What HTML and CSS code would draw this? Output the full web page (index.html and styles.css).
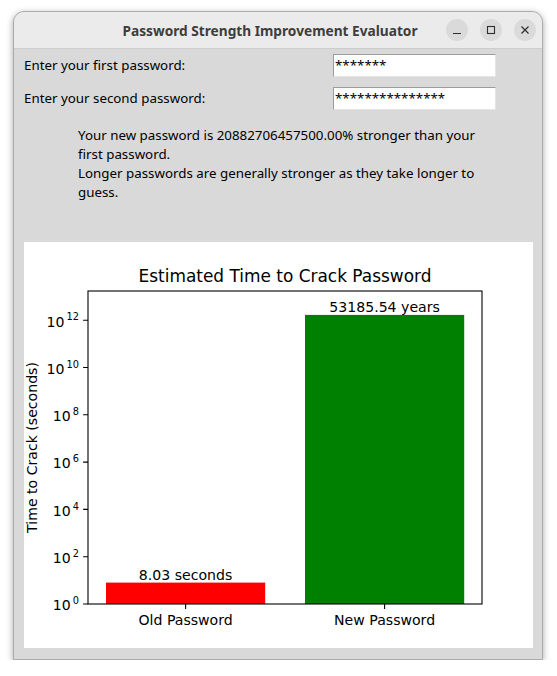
FILE: index.html
```html
<!DOCTYPE html>
<html>
<head>
<meta charset="utf-8">
<link rel="stylesheet" href="styles.css">
</head>
<body>
<div class="window">
  <div class="titlebar">
    <div class="title">Password Strength Improvement Evaluator</div>
    <div class="controls">
      <span class="wbtn"><svg width="10" height="10" viewBox="0 0 10 10"><path d="M1 8.5H9" stroke="#2e2e2e" stroke-width="1.2" fill="none"/></svg></span>
      <span class="wbtn"><svg width="10" height="10" viewBox="0 0 10 10"><rect x="1.5" y="1.5" width="7" height="7" stroke="#2e2e2e" stroke-width="1.1" fill="none"/></svg></span>
      <span class="wbtn"><svg width="10" height="10" viewBox="0 0 10 10"><path d="M1.5 1.5L8.5 8.5M8.5 1.5L1.5 8.5" stroke="#2e2e2e" stroke-width="1.2" fill="none"/></svg></span>
    </div>
  </div>
  <div class="content">
    <div class="form">
      <div class="lbl">Enter your first password:</div>
      <div class="entry">*******</div>
      <div class="lbl">Enter your second password:</div>
      <div class="entry">***************</div>
    </div>
    <p class="msg">Your new password is 20882706457500.00% stronger than your first password.<br>Longer passwords are generally stronger as they take longer to guess.</p>
    <div class="chart">
      <svg class="plot" width="509" height="406" viewBox="0 0 509 406">
        <rect x="0" y="0" width="509" height="406" fill="#fff"/>
        <text class="ttl" x="261" y="39.5" text-anchor="middle">Estimated Time to Crack Password</text>
        <rect x="82" y="340.6" width="159.2" height="21.4" fill="#ff0000"/>
        <rect x="281" y="72.9" width="159.2" height="289.1" fill="#008000"/>
        <text class="lab" x="161.6" y="337.6" text-anchor="middle">8.03 seconds</text>
        <text class="lab" x="360.6" y="69.8" text-anchor="middle">53185.54 years</text>
        <rect x="64" y="49" width="394" height="313" fill="none" stroke="#000" stroke-width="1.1"/>
        <g stroke="#000" stroke-width="1.1">
          <path d="M59.1 362H64M59.1 314.7H64M59.1 267.4H64M59.1 220.1H64M59.1 172.8H64M59.1 125.5H64M59.1 78.2H64"/>
          <path d="M161.6 362V366.9M360.6 362V366.9"/>
        </g>
        <g class="lab">
          <text x="55" y="368.3" text-anchor="end">10<tspan dx="2" dy="-6.2" font-size="9.8">0</tspan></text>
          <text x="55" y="321" text-anchor="end">10<tspan dx="2" dy="-6.2" font-size="9.8">2</tspan></text>
          <text x="55" y="273.7" text-anchor="end">10<tspan dx="2" dy="-6.2" font-size="9.8">4</tspan></text>
          <text x="55" y="226.4" text-anchor="end">10<tspan dx="2" dy="-6.2" font-size="9.8">6</tspan></text>
          <text x="55" y="179.1" text-anchor="end">10<tspan dx="2" dy="-6.2" font-size="9.8">8</tspan></text>
          <text x="55" y="131.8" text-anchor="end">10<tspan dx="2" dy="-6.2" font-size="9.8">10</tspan></text>
          <text x="55" y="84.5" text-anchor="end">10<tspan dx="2" dy="-6.2" font-size="9.8">12</tspan></text>
          <text x="161.6" y="383.2" text-anchor="middle">Old Password</text>
          <text x="360.6" y="383.2" text-anchor="middle">New Password</text>
          <text transform="translate(12.8,205.5) rotate(-90)" text-anchor="middle">Time to Crack (seconds)</text>
        </g>
      </svg>
    </div>
  </div>
</div>
</body>
</html>
```

FILE: styles.css
```css
html, body {
  margin: 0;
  padding: 0;
  background: #ffffff;
}
.window {
  box-sizing: border-box;
  margin: 11px 0 0 13px;
  width: 530px;
  height: 649px;
  border: 1px solid #ababab;
  border-radius: 11px 11px 0 0;
  background: #d9d9d9;
  box-shadow: 0 2px 7px rgba(0, 0, 0, 0.35);
  overflow: hidden;
  display: flex;
  flex-direction: column;
}
.titlebar {
  height: 36px;
  background: #ebebeb;
  border-bottom: 1px solid #cdcdcd;
  display: flex;
  align-items: center;
  padding-right: 6px;
}
.title {
  flex: 1;
  text-align: center;
  padding-left: 80px;
  font-family: "Noto Sans", sans-serif;
  font-weight: 700;
  font-size: 13.7px;
  color: #3d3d3d;
}
.controls {
  display: flex;
  gap: 12px;
}
.wbtn {
  width: 22px;
  height: 22px;
  border-radius: 50%;
  background: #dadada;
  display: flex;
  align-items: center;
  justify-content: center;
}
.content {
  flex: 1;
  padding: 0 9px 0 10px;
  font-family: "Noto Sans", sans-serif;
  font-size: 13.33px;
  color: #000;
}
.form {
  margin-top: 5px;
  display: grid;
  grid-template-columns: 309px 163px;
  grid-auto-rows: 23px;
  row-gap: 10px;
  align-items: center;
}
.lbl {
  line-height: 19px;
}
.entry {
  box-sizing: border-box;
  height: 23px;
  background: #fff;
  border-top: 1px solid #9c9c9c;
  border-left: 1px solid #9c9c9c;
  border-bottom: 1px solid #e4e4e4;
  border-right: 1px solid #e4e4e4;
  padding-left: 1px;
  line-height: 21px;
}
.msg {
  margin: 16px 0 0 54px;
  width: 415px;
  line-height: 19px;
}
.chart {
  margin-top: 40px;
  width: 509px;
  height: 406px;
  background: #fff;
}
.plot {
  display: block;
}
.plot text {
  font-family: "DejaVu Sans", sans-serif;
  fill: #000;
}
.plot .lab, .plot .lab text {
  font-size: 14.1px;
}
.plot .ttl {
  font-size: 16.95px;
}
```
